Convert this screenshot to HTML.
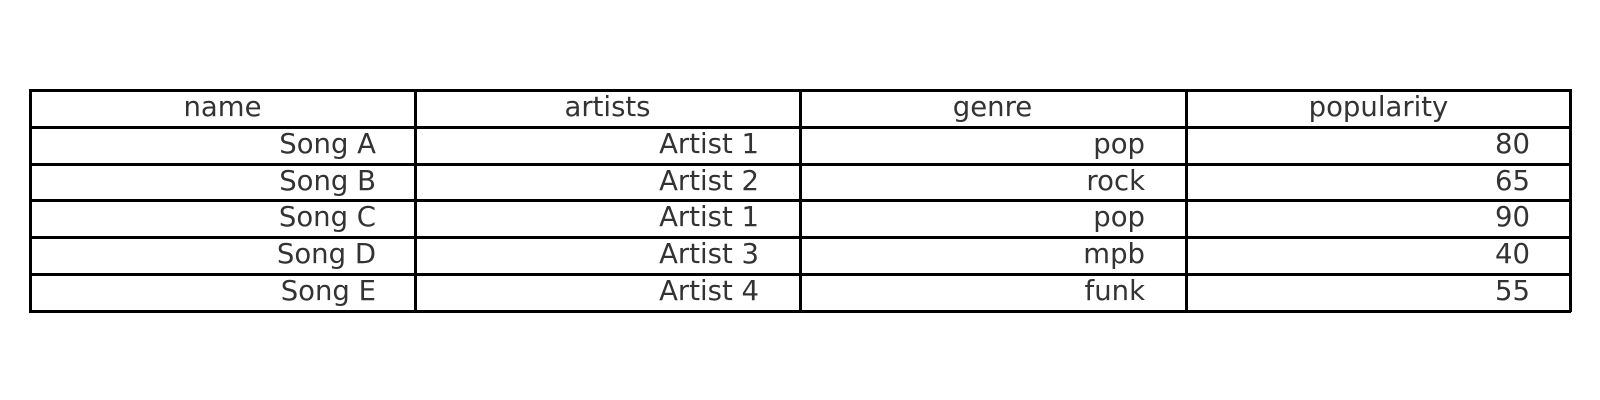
<!DOCTYPE html>
<html><head><style>
body{margin:0;width:1600px;height:400px;background:#fff;position:relative;overflow:hidden;font-family:"DejaVu Sans",sans-serif;color:#333;}
.h{position:absolute;left:29px;width:1542px;height:2.5px;background:#000;}
.v{position:absolute;top:89px;height:223px;width:2.5px;background:#000;}
.c{position:absolute;height:37px;line-height:37px;font-size:27.5px;white-space:nowrap;}
</style></head><body>
<div class="h" style="top:89px"></div>
<div class="h" style="top:126px"></div>
<div class="h" style="top:163px"></div>
<div class="h" style="top:199px"></div>
<div class="h" style="top:236px"></div>
<div class="h" style="top:273px"></div>
<div class="h" style="top:310px"></div>
<div class="v" style="left:29px"></div>
<div class="v" style="left:414px"></div>
<div class="v" style="left:799px"></div>
<div class="v" style="left:1185px"></div>
<div class="v" style="left:1569px"></div>

<div class="c" style="top:89px;left:30px;width:385px;text-align:center">name</div>
<div class="c" style="top:89px;left:415px;width:385px;text-align:center">artists</div>
<div class="c" style="top:89px;left:800px;width:385px;text-align:center">genre</div>
<div class="c" style="top:89px;left:1186px;width:385px;text-align:center">popularity</div>

<div class="c" style="top:126px;right:1224px">Song A</div>
<div class="c" style="top:163px;right:1224px">Song B</div>
<div class="c" style="top:199px;right:1224px">Song C</div>
<div class="c" style="top:236px;right:1224px">Song D</div>
<div class="c" style="top:273px;right:1224px">Song E</div>

<div class="c" style="top:126px;right:841px">Artist 1</div>
<div class="c" style="top:163px;right:841px">Artist 2</div>
<div class="c" style="top:199px;right:841px">Artist 1</div>
<div class="c" style="top:236px;right:841px">Artist 3</div>
<div class="c" style="top:273px;right:841px">Artist 4</div>

<div class="c" style="top:126px;right:455px">pop</div>
<div class="c" style="top:163px;right:455px">rock</div>
<div class="c" style="top:199px;right:455px">pop</div>
<div class="c" style="top:236px;right:455px">mpb</div>
<div class="c" style="top:273px;right:455px">funk</div>

<div class="c" style="top:126px;right:70px">80</div>
<div class="c" style="top:163px;right:70px">65</div>
<div class="c" style="top:199px;right:70px">90</div>
<div class="c" style="top:236px;right:70px">40</div>
<div class="c" style="top:273px;right:70px">55</div>
</body></html>
